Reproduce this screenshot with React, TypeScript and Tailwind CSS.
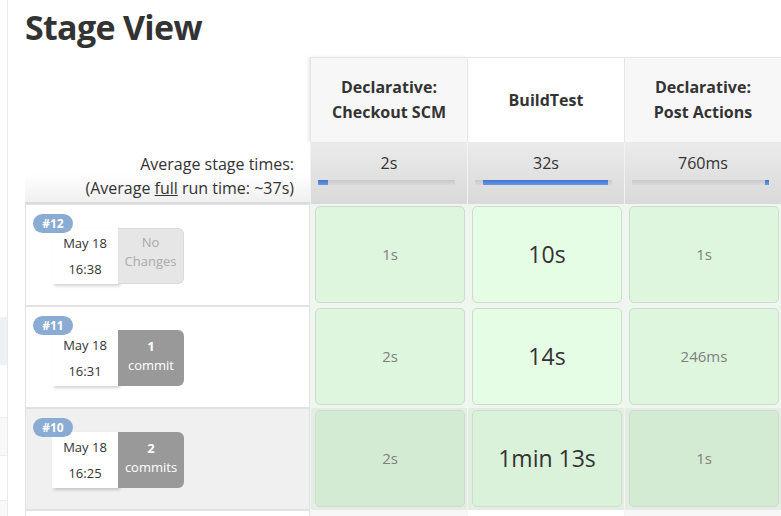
import React from 'react';

type Build = {
  id: string;
  date: string;
  time: string;
  changes: { count?: number; label: string } | null;
  durations: string[];
  hover?: boolean;
};

const stages = [
  { name: ['Declarative:', 'Checkout SCM'], avg: '2s', barLeft: 0, barWidth: 7 },
  { name: ['BuildTest'], avg: '32s', barLeft: 6, barWidth: 91 },
  { name: ['Declarative:', 'Post Actions'], avg: '760ms', barLeft: 97, barWidth: 3 },
];

const builds: Build[] = [
  { id: '#12', date: 'May 18', time: '16:38', changes: null, durations: ['1s', '10s', '1s'] },
  { id: '#11', date: 'May 18', time: '16:31', changes: { count: 1, label: 'commit' }, durations: ['2s', '14s', '246ms'] },
  { id: '#10', date: 'May 18', time: '16:25', changes: { count: 2, label: 'commits' }, durations: ['2s', '1min 13s', '1s'], hover: true },
];

function StageCell({ value, col, hover }: { value: string; col: number; hover?: boolean }) {
  const big = col === 1;
  const bg = hover
    ? col === 1 ? 'bg-[#d9f2d9]' : 'bg-[#d3ebd3]'
    : col === 1 ? 'bg-[#e5fde5]' : 'bg-[#ddf6dd]';
  return (
    <div className={`border-l border-[#f4f4f4] pl-[4px] pr-[2px] pt-[2px] pb-[3px] ${hover ? 'bg-[#e3eee3]' : 'bg-[#eef7ee]'}`}>
      <div className={`h-full rounded-[5px] border border-[#d2d9d2] ${bg} flex items-center justify-center`}>
        <span className={big ? 'text-[23px] text-[#333]' : 'text-[15px] text-[#808080]'}>{value}</span>
      </div>
    </div>
  );
}

function BuildLabel({ b }: { b: Build }) {
  return (
    <div className={`relative border border-[#e2e2e2] ${b.hover ? 'bg-[#f0f0f0]' : 'bg-white'}`}>
      <div className="absolute left-[7px] top-[9px] z-10 h-[19px] w-[40px] rounded-full bg-[#8aabd2] text-center text-[12px] font-bold leading-[19px] text-white">
        {b.id}
      </div>
      <div className="ml-[26px] mt-[23px] flex h-[56px]">
        <div className="flex w-[66px] flex-col items-center justify-center gap-[8px] bg-white text-[13px] leading-[18px] text-[#333] shadow-[2px_2px_3px_rgba(0,0,0,0.18)]">
          <span>{b.date}</span>
          <span>{b.time}</span>
        </div>
        {b.changes ? (
          <div className="flex w-[66px] flex-col items-center justify-center rounded-r-[6px] bg-[#999] pb-[4px] text-[13px] leading-[19px] text-white">
            <span className="font-bold">{b.changes.count}</span>
            <span>{b.changes.label}</span>
          </div>
        ) : (
          <div className="flex w-[66px] flex-col items-center justify-center rounded-r-[6px] border border-l-0 border-[#dadada] bg-[#e6e6e6] pb-[9px] text-[13px] leading-[19px] text-[#aaa]">
            <span>No</span>
            <span>Changes</span>
          </div>
        )}
      </div>
    </div>
  );
}

export default function App() {
  return (
    <div className="flex h-[516px] w-[781px] overflow-hidden bg-white text-[#333] [font-family:'Open_Sans',sans-serif]">
      <div className="flex w-[8px] shrink-0 flex-col border-r border-[#e6eaed]">
        <div className="h-[317px]" />
        <div className="h-[48px] bg-[#eef1f4]" />
        <div className="h-[52px]" />
        <div className="h-[38px] border-t border-[#ececec] bg-[#f8f8f8]" />
        <div className="h-[45px] border-t border-[#ececec]" />
        <div className="flex-1 border-t border-[#ececec] bg-[#f8f8f8]" />
      </div>

      <div className="flex-1 pl-[17px]">
        <h1 className="h-[57px] pt-[3px] text-[34px] font-bold leading-[48px] tracking-[-0.7px] text-[#333]">Stage View</h1>

        <div className="grid grid-cols-[285px_157px_157px_157px] grid-rows-[85px_62px_102px_102px_102px_102px]">
          <div />
          {stages.map((s, i) => (
            <div
              key={s.name.join()}
              className={`flex flex-col items-center justify-center border-l border-t border-[#e6e6e6] text-[16px] font-bold leading-[25px] ${i === 1 ? 'bg-white' : 'bg-[#f7f7f7]'} ${i === 0 ? 'shadow-[-2px_0_3px_rgba(0,0,0,0.08)]' : ''}`}
            >
              {s.name.map(l => (
                <span key={l}>{l}</span>
              ))}
            </div>
          ))}

          <div className="mt-[4px] flex flex-col items-end justify-center border-b-[2px] border-[#dcdcdc] bg-gradient-to-b from-white via-white to-[#f0f0f0] pr-[16px] pt-[3px] text-[16px] leading-[24px]">
            <span>Average stage times:</span>
            <span>
              (Average <span className="underline">full</span> run time: ~37s)
            </span>
          </div>
          {stages.map(s => (
            <div
              key={s.avg}
              className="flex flex-col items-start border-l border-[#f2f2f2] bg-gradient-to-b from-[#ebebeb] to-[#d9d9d9] pt-[10px]"
            >
              <span className="w-[156px] text-center text-[16px] leading-[22px]">{s.avg}</span>
              <div className="relative ml-[7px] mt-[6px] h-[5px] w-[137px] bg-gradient-to-b from-[#c8c8c8] to-[#dadada]">
                <div
                  className="absolute top-0 h-full bg-gradient-to-b from-[#3f74d0] to-[#6a98e4]"
                  style={{ left: `${s.barLeft}%`, width: `${s.barWidth}%` }}
                />
              </div>
            </div>
          ))}

          {builds.map(b => (
            <React.Fragment key={b.id}>
              <BuildLabel b={b} />
              {b.durations.map((d, i) => (
                <StageCell key={i} value={d} col={i} hover={b.hover} />
              ))}
            </React.Fragment>
          ))}

          <div className="border border-[#e2e2e2] bg-white" />
          <div className="border-l border-[#f4f4f4] bg-[#f7f7f7]" />
          <div className="border-l border-[#f4f4f4] bg-white" />
          <div className="border-l border-[#f4f4f4] bg-[#f7f7f7]" />
        </div>
      </div>
    </div>
  );
}
